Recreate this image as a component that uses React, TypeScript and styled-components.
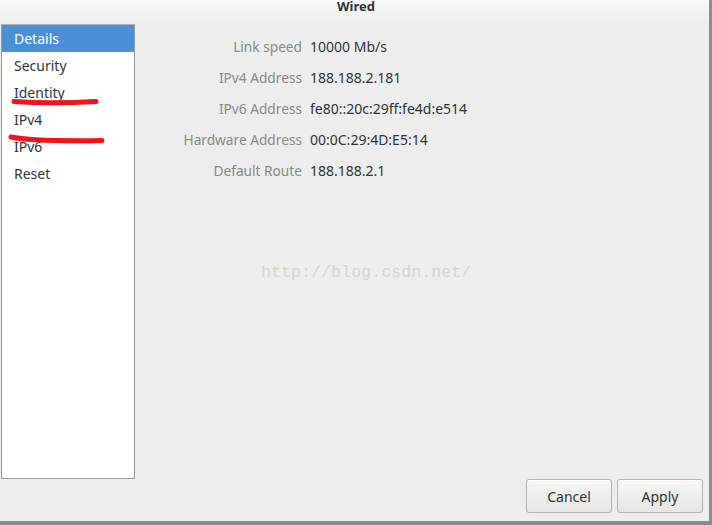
import React from "react";
import styled, { createGlobalStyle } from "styled-components";

const Global = createGlobalStyle`
  html, body { margin: 0; padding: 0; background: #ededed; }
  body { font-family: "Noto Sans", "DejaVu Sans", sans-serif; }
`;

const Window = styled.div`
  position: relative;
  width: 712px;
  height: 525px;
  box-sizing: border-box;
  background: #ededed;
  border-right: 3px solid #8c8c8c;
  border-bottom: 4px solid #8a8a8a;
  display: flex;
  flex-direction: column;
  overflow: hidden;
`;

const TitleBar = styled.div`
  height: 24px;
  flex: none;
  box-sizing: border-box;
  padding-top: 1px;
  background: linear-gradient(#f7f7f7, #ededed);
  display: flex;
  justify-content: center;
  align-items: flex-start;
  font-weight: bold;
  font-size: 13px;
  color: #2e3436;
  line-height: 11px;
  padding-left: 3px;
`;

const Body = styled.div`
  flex: 1;
  display: flex;
  min-height: 0;
`;

const Sidebar = styled.div`
  width: 134px;
  height: 455px;
  margin-left: 1px;
  box-sizing: border-box;
  background: #fff;
  border: 1px solid #9b9b9b;
  border-top-color: #b0b0b0;
  display: flex;
  flex-direction: column;
`;

const NavItem = styled.div<{ $active?: boolean }>`
  height: 27px;
  display: flex;
  align-items: center;
  padding-left: 12px;
  font-size: 14px;
  color: ${(p) => (p.$active ? "#ffffff" : "#2e3436")};
  background: ${(p) => (p.$active ? "#4a90d9" : "transparent")};
`;

const Main = styled.div`
  flex: 1;
  display: flex;
  flex-direction: column;
  position: relative;
`;

const DetailGrid = styled.div`
  display: grid;
  grid-template-columns: 167px auto;
  column-gap: 8px;
  row-gap: 0;
  padding-top: 10px;
  justify-content: start;
`;

const Label = styled.div`
  height: 31px;
  line-height: 26px;
  text-align: right;
  font-size: 13.7px;
  color: #888a85;
`;

const Value = styled.div`
  height: 31px;
  line-height: 26px;
  font-size: 14px;
  color: #2e3436;
`;

const Watermark = styled.div`
  position: absolute;
  left: 126px;
  top: 239px;
  font-family: "Liberation Mono", monospace;
  font-size: 16.7px;
  color: #d8d4cf;
  letter-spacing: 0;
`;

const ButtonRow = styled.div`
  margin-top: auto;
  display: flex;
  justify-content: flex-end;
  gap: 5px;
  padding: 0 6px 8px 0;
`;

const Button = styled.button`
  width: 86px;
  height: 34px;
  box-sizing: border-box;
  border: 1px solid #b3b3b0;
  border-radius: 3px;
  background: linear-gradient(#f6f6f5, #e6e6e5);
  font-family: "Noto Sans", "DejaVu Sans", sans-serif;
  font-size: 14px;
  color: #2e3436;
  box-shadow: inset 0 1px 0 #ffffff;
`;

const Annotation = styled.svg`
  position: absolute;
  left: 0;
  top: 0;
  pointer-events: none;
`;

const rows: [string, string][] = [
  ["Link speed", "10000 Mb/s"],
  ["IPv4 Address", "188.188.2.181"],
  ["IPv6 Address", "fe80::20c:29ff:fe4d:e514"],
  ["Hardware Address", "00:0C:29:4D:E5:14"],
  ["Default Route", "188.188.2.1"],
];

const nav = ["Details", "Security", "Identity", "IPv4", "IPv6", "Reset"];

export default function App() {
  return (
    <>
      <Global />
      <Window>
        <TitleBar>Wired</TitleBar>
        <Body>
          <Sidebar>
            {nav.map((n, i) => (
              <NavItem key={n} $active={i === 0}>
                {n}
              </NavItem>
            ))}
          </Sidebar>
          <Main>
            <DetailGrid>
              {rows.map(([l, v]) => (
                <React.Fragment key={l}>
                  <Label>{l}</Label>
                  <Value>{v}</Value>
                </React.Fragment>
              ))}
            </DetailGrid>
            <Watermark>http://blog.csdn.net/</Watermark>
            <ButtonRow>
              <Button>Cancel</Button>
              <Button>Apply</Button>
            </ButtonRow>
          </Main>
        </Body>
        <Annotation width="712" height="525" viewBox="0 0 712 525">
          <path
            d="M14 101.5 C 35 103, 70 103, 96 101.5"
            stroke="#f0141e"
            strokeWidth="5"
            strokeLinecap="round"
            fill="none"
          />
          <path
            d="M11 137 C 30 141, 70 141, 102 140.5"
            stroke="#f0141e"
            strokeWidth="5"
            strokeLinecap="round"
            fill="none"
          />
        </Annotation>
      </Window>
    </>
  );
}
